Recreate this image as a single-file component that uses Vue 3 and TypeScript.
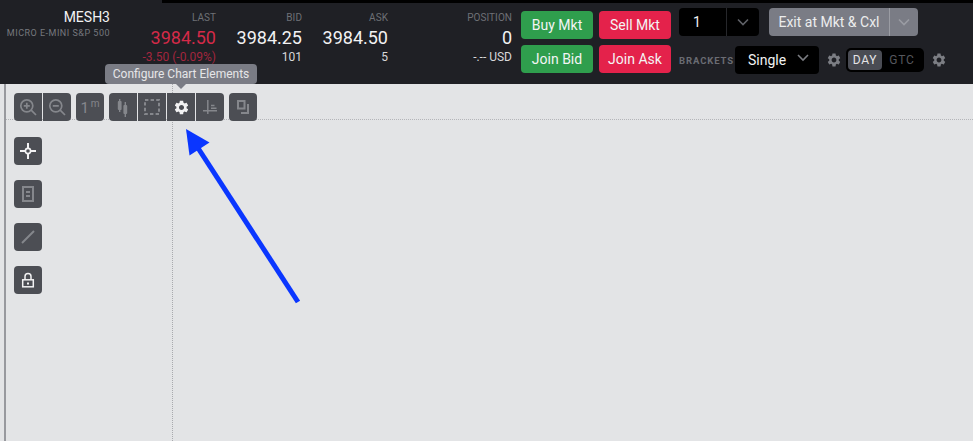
<script setup lang="ts">
const gear = 'M19.14 12.94c.04-.3.06-.61.06-.94 0-.32-.02-.64-.07-.94l2.03-1.58c.18-.14.23-.41.12-.61l-1.92-3.32c-.12-.22-.37-.29-.59-.22l-2.39.96c-.5-.38-1.03-.7-1.62-.94l-.36-2.54c-.04-.24-.24-.41-.48-.41h-3.84c-.24 0-.43.17-.47.41l-.36 2.54c-.59.24-1.13.57-1.62.94l-2.39-.96c-.22-.08-.47 0-.59.22L2.74 8.87c-.12.21-.08.47.12.61l2.03 1.58c-.05.3-.09.63-.09.94s.02.64.07.94l-2.03 1.58c-.18.14-.23.41-.12.61l1.92 3.32c.12.22.37.29.59.22l2.39-.96c.5.38 1.03.7 1.62.94l.36 2.54c.05.24.24.41.48.41h3.84c.24 0 .44-.17.47-.41l.36-2.54c.59-.24 1.13-.56 1.62-.94l2.39.96c.22.08.47 0 .59-.22l1.92-3.32c.12-.22.07-.47-.12-.61l-2.01-1.58zM12 15.6c-1.98 0-3.6-1.62-3.6-3.6s1.62-3.6 3.6-3.6 3.6 1.62 3.6 3.6-1.62 3.6-3.6 3.6z'

const quotes = [
  { label: 'BID', value: '3984.25', sub: '101' },
  { label: 'ASK', value: '3984.50', sub: '5' },
]
</script>

<template>
  <div class="page">
    <div class="topstrip"></div>
    <header class="header">
      <div class="symbol">
        <div class="symbol-name">MESH3</div>
        <div class="symbol-desc">MICRO E-MINI S&amp;P 500</div>
      </div>
      <div class="quote last">
        <div class="quote-label">LAST</div>
        <div class="quote-value red">3984.50</div>
        <div class="quote-sub dimred">-3.50 (-0.09%)</div>
      </div>
      <div v-for="q in quotes" :key="q.label" class="quote">
        <div class="quote-label">{{ q.label }}</div>
        <div class="quote-value">{{ q.value }}</div>
        <div class="quote-sub">{{ q.sub }}</div>
      </div>
      <div class="quote position">
        <div class="quote-label">POSITION</div>
        <div class="quote-value">0</div>
        <div class="quote-sub">-.-- USD</div>
      </div>
      <div class="order-btns">
        <button class="btn green">Buy Mkt</button>
        <button class="btn red-bg">Sell Mkt</button>
        <button class="btn green">Join Bid</button>
        <button class="btn red-bg">Join Ask</button>
      </div>
      <div class="controls">
        <div class="controls-row">
          <div class="qty">
            <span class="qty-value">1</span>
            <span class="qty-arrow">
              <svg width="12" height="8" viewBox="0 0 12 8" fill="none" stroke="#5f6167" stroke-width="1.6"><path d="M1 1.5l5 5 5-5"/></svg>
            </span>
          </div>
          <div class="exit">
            <span class="exit-label">Exit at Mkt &amp; Cxl</span>
            <span class="exit-arrow">
              <svg width="12" height="8" viewBox="0 0 12 8" fill="none" stroke="#9a9ca3" stroke-width="1.6"><path d="M1 1.5l5 5 5-5"/></svg>
            </span>
          </div>
        </div>
        <div class="controls-row second">
          <span class="brackets">BRACKETS</span>
          <div class="single">
            <span>Single</span>
            <svg class="single-arrow" width="12" height="8" viewBox="0 0 12 8" fill="none" stroke="#7b7d82" stroke-width="1.6"><path d="M1 1l5 5 5-5"/></svg>
          </div>
          <svg class="hgear" width="16" height="16" viewBox="0 0 24 24" fill="#7c7e84"><path :d="gear"/></svg>
          <div class="tif">
            <span class="tif-on">DAY</span>
            <span class="tif-off">GTC</span>
          </div>
          <svg class="hgear2" width="16" height="16" viewBox="0 0 24 24" fill="#7c7e84"><path :d="gear"/></svg>
        </div>
      </div>
    </header>

    <main class="chart">
      <div class="grid-h"></div>
      <div class="grid-v"></div>

      <div class="toolbar">
        <div class="group">
          <button class="tool">
            <svg width="20" height="20" viewBox="0 0 20 20" fill="none" stroke="#85878c" stroke-width="1.7"><circle cx="8.8" cy="8.8" r="6"/><path d="M13.2 13.2l4.8 4.8M8.8 5.8v6M5.8 8.8h6"/></svg>
          </button>
          <button class="tool">
            <svg width="20" height="20" viewBox="0 0 20 20" fill="none" stroke="#85878c" stroke-width="1.7"><circle cx="8.8" cy="8.8" r="6"/><path d="M13.2 13.2l4.8 4.8M5.8 8.8h6"/></svg>
          </button>
        </div>
        <div class="group">
          <button class="tool interval">1<sup>m</sup></button>
        </div>
        <div class="group">
          <button class="tool">
            <svg width="14" height="20" viewBox="0 0 14 20" fill="#85878c"><rect x="3" y="2" width="1.4" height="13"/><rect x="1.8" y="4" width="3.8" height="9" rx="1"/><rect x="8.6" y="5" width="1.4" height="15"/><rect x="7.4" y="8" width="3.8" height="9" rx="1"/></svg>
          </button>
          <button class="tool">
            <svg width="18" height="18" viewBox="0 0 18 18" fill="none" stroke="#85878c" stroke-width="2"><rect x="2" y="2" width="14" height="14" stroke-dasharray="3.4 2.2"/></svg>
          </button>
          <button class="tool">
            <svg width="17" height="17" viewBox="0 0 24 24" fill="#f2f2f3"><path :d="gear"/></svg>
          </button>
          <button class="tool">
            <svg width="16" height="16" viewBox="0 0 16 16" fill="none" stroke="#85878c" stroke-width="1.5"><path d="M5.8 1v14M1 11.8h14M9 6.5h3.5M9 9.3h5.5"/></svg>
          </button>
        </div>
        <div class="group">
          <button class="tool">
            <svg width="16" height="16" viewBox="0 0 16 16" fill="none" stroke="#85878c" stroke-width="2"><rect x="3" y="2" width="6.5" height="7.5"/><path d="M13 5v9H6"/></svg>
          </button>
        </div>
      </div>

      <div class="sidetools">
        <button class="tool solo">
          <svg width="18" height="18" viewBox="0 0 18 18" fill="none" stroke="#f2f2f3" stroke-width="2"><circle cx="9" cy="9" r="2.6" stroke-width="1.6"/><path d="M9 1v5M9 12v5M1 9h5M12 9h5"/></svg>
        </button>
        <button class="tool solo">
          <svg width="14" height="18" viewBox="0 0 14 18" fill="none" stroke="#85878c" stroke-width="2"><rect x="2" y="2" width="10" height="14"/><path d="M5 7h4M5 11h4"/></svg>
        </button>
        <button class="tool solo">
          <svg width="16" height="16" viewBox="0 0 16 16" fill="none" stroke="#85878c" stroke-width="2"><path d="M2 14L14 2"/></svg>
        </button>
        <button class="tool solo">
          <svg width="16" height="18" viewBox="0 0 16 18" fill="none" stroke="#f2f2f3" stroke-width="1.5"><rect x="2.7" y="8.8" width="10.6" height="7"/><path d="M5 8.8V5.5a3 3 0 0 1 6 0v3.3"/><rect x="7" y="11.5" width="2" height="2" fill="#f2f2f3" stroke="none"/></svg>
        </button>
      </div>

      <div class="tooltip">Configure Chart Elements</div>

      <svg class="pointer" width="320" height="240" viewBox="0 0 320 240">
        <path d="M298 218 L198 64" stroke="#0a36ff" stroke-width="5" fill="none"/>
        <path d="M186 45 L209.5 58.5 L189.5 71.5 Z" fill="#0a36ff"/>
      </svg>
    </main>
  </div>
</template>

<style>
html, body { margin: 0; height: 100%; }
</style>

<style scoped>
.page {
  position: relative;
  width: 973px;
  height: 441px;
  overflow: hidden;
  display: flex;
  flex-direction: column;
  font-family: Roboto, "Liberation Sans", sans-serif;
  background: #e3e4e6;
}

.topstrip {
  position: absolute;
  top: 0;
  left: 162px;
  right: 0;
  height: 3px;
  background: #000;
}

.header {
  height: 84px;
  flex-shrink: 0;
  display: flex;
  align-items: flex-start;
  background: #1f2025;
  color: #f2f2f3;
}

.symbol {
  width: 110px;
  padding-top: 9px;
  text-align: right;
}
.symbol-name { font-size: 14px; line-height: 17px; }
.symbol-desc {
  font-size: 9px;
  line-height: 14px;
  letter-spacing: 0.5px;
  color: #76787e;
  white-space: nowrap;
}

.quote {
  width: 86px;
  padding-top: 12px;
  text-align: right;
  flex-shrink: 0;
}
.quote.last { width: 106px; }
.quote.position { width: 124px; }
.quote-label {
  font-size: 10px;
  line-height: 12px;
  letter-spacing: 0.05px;
  color: #6e7076;
}
.quote-value {
  font-size: 18px;
  line-height: 26px;
  padding-top: 1px;
}
.quote-sub {
  font-size: 12px;
  line-height: 14px;
  margin-top: -1px;
  color: #d8d8da;
}
.red { color: #d42a48; }
.dimred { color: #a3263e; }

.order-btns {
  margin-left: 9px;
  margin-top: 11px;
  display: grid;
  grid-template-columns: 72px 72px;
  grid-auto-rows: 28px;
  column-gap: 6px;
  row-gap: 6px;
}
.btn {
  border: 0;
  padding: 0;
  border-radius: 4px;
  color: #f4f4f5;
  font: 14px Roboto, sans-serif;
}
.green { background: #2f9e4d; }
.red-bg { background: #e4224b; }

.controls {
  margin-left: 8px;
  margin-top: 8px;
  display: flex;
  flex-direction: column;
}
.controls-row {
  display: flex;
  align-items: center;
}
.controls-row.second { margin-top: 10px; }

.qty {
  width: 80px;
  height: 28px;
  display: flex;
  background: #000;
  border-radius: 4px;
  font-size: 14px;
  line-height: 28px;
}
.qty-value { width: 47px; padding-left: 14px; box-sizing: border-box; }
.qty-arrow {
  flex: 1;
  display: flex;
  align-items: center;
  justify-content: center;
  border-left: 1px solid #26272b;
}

.exit {
  margin-left: 10px;
  width: 149px;
  height: 28px;
  display: flex;
  border-radius: 4px;
  background: #7a7c85;
  font-size: 14px;
  line-height: 28px;
  color: #eceded;
}
.exit-label {
  width: 120px;
  text-align: center;
  white-space: nowrap;
}
.exit-arrow {
  flex: 1;
  display: flex;
  align-items: center;
  justify-content: center;
  border-left: 1px solid #9a9ca3;
}

.brackets {
  width: 56px;
  flex-shrink: 0;
  font-size: 9.5px;
  font-weight: 700;
  letter-spacing: 0.9px;
  color: #6a6c73;
  white-space: nowrap;
}
.single {
  width: 84px;
  height: 28px;
  box-sizing: border-box;
  padding: 0 10px 0 13px;
  display: flex;
  align-items: center;
  justify-content: space-between;
  background: #000;
  border-radius: 4px;
  font-size: 14px;
}
.single-arrow { margin-top: -5px; }
.hgear { margin-left: 7px; }
.tif {
  margin-left: 4px;
  width: 78px;
  height: 24px;
  box-sizing: border-box;
  padding: 2px;
  display: flex;
  background: #000;
  border-radius: 5px;
  font-size: 12px;
  letter-spacing: 0.8px;
  line-height: 20px;
  text-align: center;
}
.tif-on {
  width: 34px;
  background: #4a4c54;
  border-radius: 4px;
  color: #e4e4e6;
}
.tif-off { flex: 1; color: #55575d; }
.hgear2 { margin-left: 7px; }

.chart {
  position: relative;
  flex: 1;
  box-sizing: border-box;
  padding: 9px 0 0 14px;
}
.chart::before {
  content: '';
  position: absolute;
  left: 4px;
  top: 0;
  bottom: 0;
  width: 2px;
  background: #98999e;
}
.grid-h {
  position: absolute;
  left: 6px;
  right: 0;
  top: 35px;
  border-top: 1px dotted #b4b5b9;
}
.grid-v {
  position: absolute;
  left: 172px;
  top: 0;
  bottom: 0;
  border-left: 1px dotted #a9aaae;
}

.toolbar {
  position: relative;
  display: flex;
  gap: 5px;
}
.group {
  display: flex;
  gap: 1px;
  border-radius: 4px;
  overflow: hidden;
}
.tool {
  width: 28px;
  height: 28px;
  padding: 0;
  border: 0;
  display: flex;
  align-items: center;
  justify-content: center;
  background: #4c4e54;
}
.interval {
  font: 15px Roboto, sans-serif;
  color: #85878c;
  align-items: flex-start;
  line-height: 30px;
}
.interval sup {
  font-size: 10px;
  line-height: 10px;
  margin-top: 6px;
  margin-left: 2px;
}
.sidetools {
  position: relative;
  margin-top: 16px;
  display: flex;
  flex-direction: column;
  gap: 15px;
}
.solo { border-radius: 4px; }

.tooltip {
  position: absolute;
  left: 105px;
  top: -20px;
  width: 152px;
  height: 20px;
  border-radius: 4px;
  background: #7a7c85;
  color: #e6e6e8;
  font-size: 12px;
  line-height: 20px;
  text-align: center;
  white-space: nowrap;
}
.tooltip::after {
  content: '';
  position: absolute;
  left: 71px;
  top: 20px;
  border: 5px solid transparent;
  border-top-color: #7a7c85;
  border-bottom: 0;
}
.pointer {
  position: absolute;
  left: 0;
  top: 0;
  pointer-events: none;
}
</style>
